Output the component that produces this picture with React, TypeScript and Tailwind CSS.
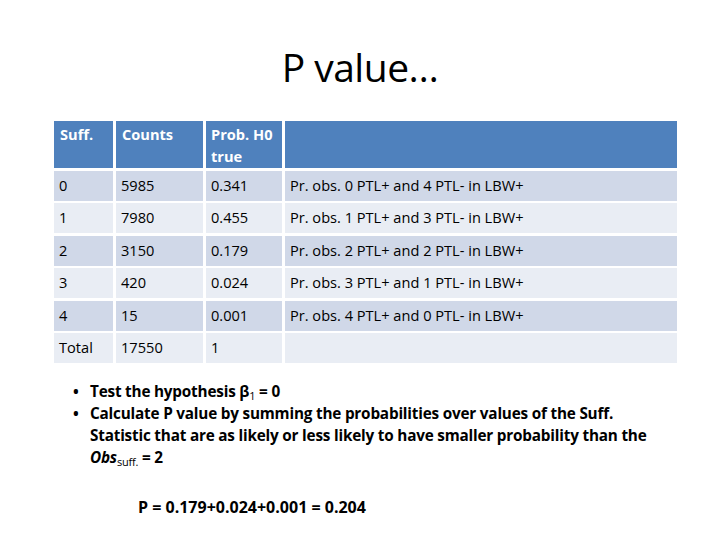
import React from "react";

const rows = [
  ["0", "5985", "0.341", "Pr. obs. 0 PTL+ and 4 PTL- in LBW+"],
  ["1", "7980", "0.455", "Pr. obs. 1 PTL+ and 3 PTL- in LBW+"],
  ["2", "3150", "0.179", "Pr. obs. 2 PTL+ and 2 PTL- in LBW+"],
  ["3", "420", "0.024", "Pr. obs. 3 PTL+ and 1 PTL- in LBW+"],
  ["4", "15", "0.001", "Pr. obs. 4 PTL+ and 0 PTL- in LBW+"],
  ["Total", "17550", "1", ""],
];

export default function App() {
  return (
    <div
      className="w-[720px] h-[540px] bg-white text-black overflow-hidden flex flex-col"
      style={{ fontFamily: '"Open Sans", "Noto Sans", sans-serif' }}
    >
      <div className="h-[121px] flex justify-center pt-[42px]">
        <div className="text-[39px] leading-[50px] tracking-[-0.5px]">P value…</div>
      </div>
      <div className="ml-[54px] w-[623px] grid grid-cols-[59px_87px_76px_1fr] gap-x-[3px] gap-y-[2.5px] text-[14.6px]">
        <div className="bg-[#4F81BD] h-[47px] px-[6px] pt-[2px] leading-[22px] font-bold text-white">Suff.</div>
        <div className="bg-[#4F81BD] h-[47px] px-[6px] pt-[2px] leading-[22px] font-bold text-white">Counts</div>
        <div className="bg-[#4F81BD] h-[47px] px-[5px] pt-[2px] leading-[22px] font-bold text-white">Prob. H0 true</div>
        <div className="bg-[#4F81BD] h-[47px]"></div>
        {rows.map((r, i) =>
          r.map((c, j) => (
            <div
              key={i + "-" + j}
              className={
                (i % 2 === 0 ? "bg-[#D0D8E8]" : "bg-[#E9EDF4]") +
                " h-[30px] flex items-center px-[5px] whitespace-nowrap"
              }
            >
              {c}
            </div>
          ))
        )}
      </div>
      <div className="mt-[17px] ml-[73px] text-[15.3px] font-bold leading-[22px] tracking-[-0.2px] whitespace-nowrap">
        <div className="flex">
          <span className="w-[17px]">•</span>
          <span>
            Test the hypothesis β<sub className="text-[11px] font-normal">1</sub> = 0
          </span>
        </div>
        <div className="flex">
          <span className="w-[17px] shrink-0">•</span>
          <span>
            Calculate P value by summing the probabilities over values of the Suff.
            <br />
            Statistic that are as likely or less likely to have smaller probability than the
            <br />
            <i>Obs</i>
            <sub className="text-[11px] font-normal">suff.</sub> = 2
          </span>
        </div>
        <div className="mt-[28px] ml-[65px] text-[16px] tracking-[0px]">P = 0.179+0.024+0.001 = 0.204</div>
      </div>
    </div>
  );
}
